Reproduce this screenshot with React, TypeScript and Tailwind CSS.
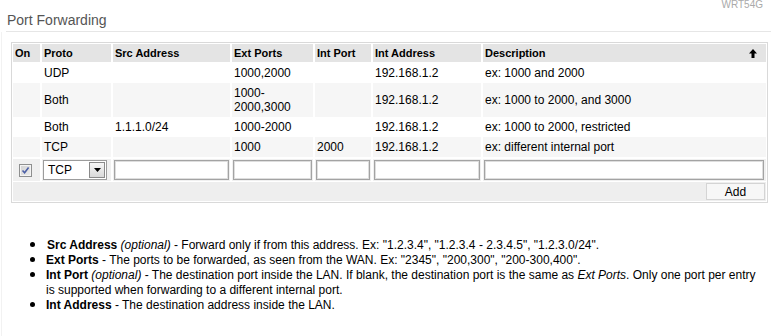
import type { ReactNode } from 'react';

type Rule = {
  proto: string;
  src: string;
  ext: string[];
  port: string;
  addr: string;
  desc: string;
};

const rules: Rule[] = [
  { proto: 'UDP', src: '', ext: ['1000,2000'], port: '', addr: '192.168.1.2', desc: 'ex: 1000 and 2000' },
  { proto: 'Both', src: '', ext: ['1000-', '2000,3000'], port: '', addr: '192.168.1.2', desc: 'ex: 1000 to 2000, and 3000' },
  { proto: 'Both', src: '1.1.1.0/24', ext: ['1000-2000'], port: '', addr: '192.168.1.2', desc: 'ex: 1000 to 2000, restricted' },
  { proto: 'TCP', src: '', ext: ['1000'], port: '2000', addr: '192.168.1.2', desc: 'ex: different internal port' },
];

function SortArrow() {
  return (
    <svg width="8" height="9" viewBox="0 0 8 9" className="mr-[7px] shrink-0">
      <path d="M4 0 L8 4.5 H5.5 V9 H2.5 V4.5 H0 Z" fill="#000" />
    </svg>
  );
}

function CheckBox() {
  return (
    <span className="block w-[13px] h-[13px] border border-[#8e8f8f] bg-gradient-to-br from-[#d2d2d2] to-[#ececec] shadow-[inset_0_0_0_1px_#f4f4f4]">
      <svg width="11" height="11" viewBox="0 0 11 11">
        <path d="M2.5 5.5 L4.6 7.8 L8.6 2.6" stroke="#4b5fa6" strokeWidth="1.6" fill="none" />
      </svg>
    </span>
  );
}

function ProtoSelect() {
  return (
    <div className="flex items-center w-[64px] h-[20px] border border-[#9c9c9c] bg-white">
      <span className="flex-1 pl-[4px] text-[12px] leading-[14px]">TCP</span>
      <span className="flex items-center justify-center w-[16px] h-[16px] mr-[1px] border border-[#8a8a8a] bg-gradient-to-b from-[#f6f6f6] to-[#d9d9d9]">
        <svg width="7" height="4" viewBox="0 0 7 4">
          <path d="M0 0 H7 L3.5 4 Z" fill="#000" />
        </svg>
      </span>
    </div>
  );
}

function TextBox() {
  return <div className="w-full h-[20px] border border-[#a3a3a3] bg-white shadow-[inset_0_0_0_1px_#dedede]" />;
}

function Note({ children }: { children: ReactNode }) {
  return (
    <li className="flex">
      <span className="w-[16px] shrink-0 pt-[4px]">
        <span className="block w-[5px] h-[5px] rounded-full bg-black" />
      </span>
      <div>{children}</div>
    </li>
  );
}

export default function App() {
  const th = 'h-[18px] px-[2px] py-0 text-left font-bold text-[11px] leading-[14px] bg-[#e4e4e4]';
  const td = 'px-[2px] py-[3px] align-middle';
  const inp = 'h-[24px] px-[1px] py-[1px] bg-[#f0f0f0] border-t-2 border-white';

  return (
    <div className="w-[771px] h-[336px] overflow-hidden bg-white text-black font-['Liberation_Sans',Arial,sans-serif]">
      <div className="h-[10px] flex justify-end pr-[8px] text-[10px] leading-[10px] text-[#aaaaaa]">WRT54G</div>

      <div className="mt-[2px] ml-[6px] pl-[1px] pb-[3px] border-b border-[#e6e6e6] text-[14px] leading-[16px] text-[#555555]">
        Port Forwarding
      </div>

      <div className="ml-[1px] border-l border-[#f2f2f2] pl-[9px] pr-[3px] pt-[10px] h-[304px]">
        <div className="border border-[#d9d9d9] pt-[1px] pb-[1px]">
          <table className="-ml-px w-[calc(100%+2px)] table-fixed border-separate border-spacing-x-[2px] border-spacing-y-0 text-[12px] leading-[14px]">
            <thead>
              <tr>
                <th className={`${th} w-[27px] text-center`}>On</th>
                <th className={`${th} w-[69px]`}>Proto</th>
                <th className={`${th} w-[117px]`}>Src Address</th>
                <th className={`${th} w-[81px]`}>Ext Ports</th>
                <th className={`${th} w-[56px]`}>Int Port</th>
                <th className={`${th} w-[108px]`}>Int Address</th>
                <th className={th}>
                  <div className="flex items-center justify-between">
                    <span>Description</span>
                    <SortArrow />
                  </div>
                </th>
              </tr>
            </thead>
            <tbody>
              {rules.map((r, i) => {
                const bg = i % 2 === 1 ? 'bg-[#f6f6f6]' : 'bg-white';
                const h = r.ext.length > 1 ? 'h-[34px]' : i === 0 ? 'h-[21px]' : 'h-[20px]';
                return (
                  <tr key={i} className={`${bg} ${h}`}>
                    <td className={td}></td>
                    <td className={td}>{r.proto}</td>
                    <td className={td}>{r.src}</td>
                    <td className={td}>
                      {r.ext.map((e, j) => (
                        <div key={j}>{e}</div>
                      ))}
                    </td>
                    <td className={td}>{r.port}</td>
                    <td className={td}>{r.addr}</td>
                    <td className={td}>{r.desc}</td>
                  </tr>
                );
              })}
              <tr>
                <td className={`${inp} pl-[6px]`}>
                  <CheckBox />
                </td>
                <td className={inp}>
                  <ProtoSelect />
                </td>
                <td className={inp}>
                  <TextBox />
                </td>
                <td className={inp}>
                  <TextBox />
                </td>
                <td className={inp}>
                  <TextBox />
                </td>
                <td className={inp}>
                  <TextBox />
                </td>
                <td className={`${inp} pr-[2px]`}>
                  <TextBox />
                </td>
              </tr>
              <tr>
                <td colSpan={7} className="h-[20px] bg-[#eeeeee] border-t border-white pt-[1px] pb-[1px] pr-[1px] align-top">
                  <div className="flex justify-end">
                    <button className="w-[59px] h-[17px] border border-[#d4d4d4] bg-[#f7f7f7] text-[12px] leading-[14px] text-black">
                      Add
                    </button>
                  </div>
                </td>
              </tr>
            </tbody>
          </table>
        </div>

        <ul className="mt-[35px] pl-[19px] pr-[5px] text-[12px] leading-[15px]">
          <Note>
            <b className="ml-[1px]">Src Address</b> <i>(optional)</i> - Forward only if from this address. Ex: "1.2.3.4",
            "1.2.3.4 - 2.3.4.5", "1.2.3.0/24".
          </Note>
          <Note>
            <b>Ext Ports</b> - The ports to be forwarded, as seen from the WAN. Ex: "2345", "200,300", "200-300,400".
          </Note>
          <Note>
            <b>Int Port</b> <i>(optional)</i> - The destination port inside the LAN. If blank, the destination port is the
            same as <i>Ext Ports</i>. Only one port per entry is supported when forwarding to a different internal port.
          </Note>
          <Note>
            <b>Int Address</b> - The destination address inside the LAN.
          </Note>
        </ul>
      </div>
    </div>
  );
}
